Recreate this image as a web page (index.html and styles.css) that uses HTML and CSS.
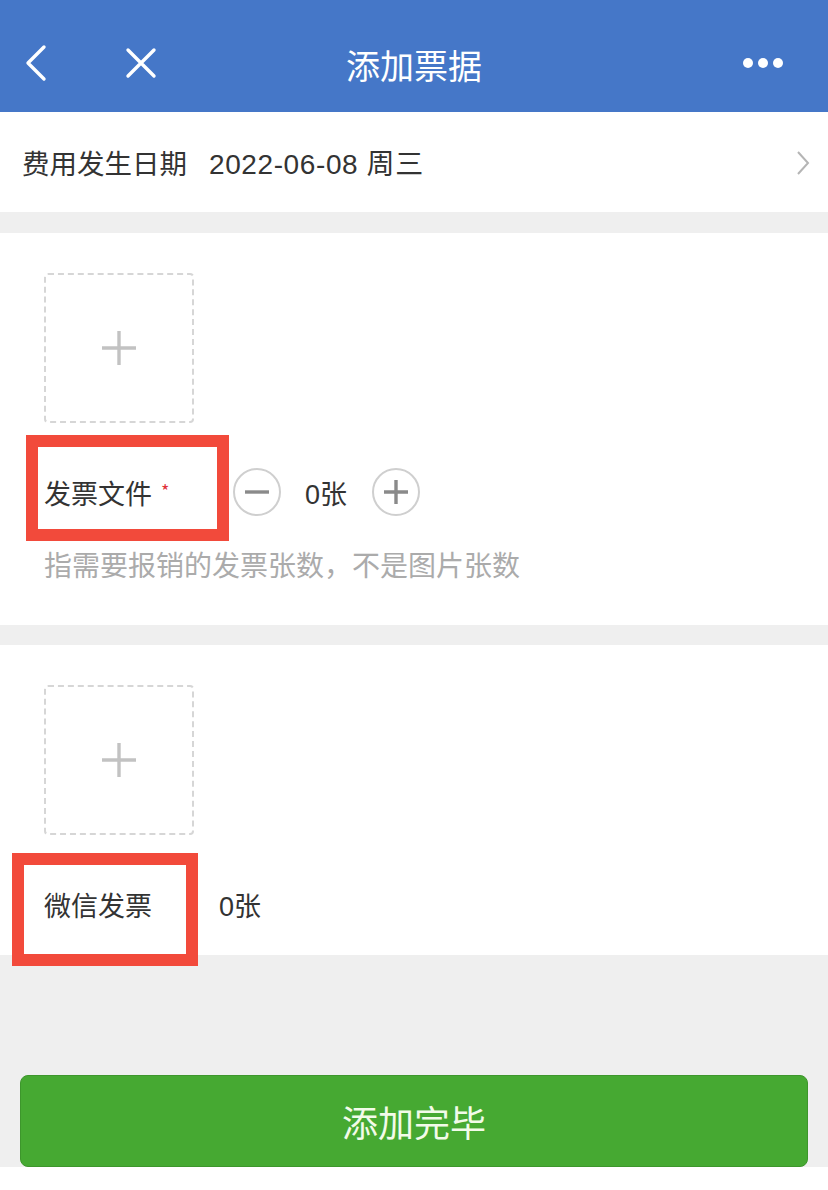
FILE: index.html
```html
<!DOCTYPE html>
<html lang="zh">
<head>
<meta charset="utf-8">
<link rel="stylesheet" href="styles.css">
</head>
<body>
<div class="page">
  <header class="nav">
    <div class="nav-left">
      <svg class="ico-back" width="30" height="40" viewBox="0 0 30 40"><polyline points="20,4 4,20 20,36" fill="none" stroke="#fff" stroke-width="3.4" stroke-linecap="round" stroke-linejoin="round"/></svg>
      <svg class="ico-close" width="34" height="34" viewBox="0 0 34 34"><path d="M4 4 L30 30 M30 4 L4 30" stroke="#fff" stroke-width="3.4" stroke-linecap="round"/></svg>
    </div>
    <div class="nav-title">添加票据</div>
    <div class="nav-right">
      <svg width="42" height="12" viewBox="0 0 42 12"><circle cx="6" cy="6" r="5" fill="#fff"/><circle cx="21" cy="6" r="5" fill="#fff"/><circle cx="36" cy="6" r="5" fill="#fff"/></svg>
    </div>
  </header>

  <div class="date-row">
    <span class="date-label">费用发生日期</span>
    <span class="date-value">2022-06-08 周三</span>
    <svg class="chev" width="14" height="26" viewBox="0 0 14 26"><polyline points="2,2 12,13 2,24" fill="none" stroke="#b5b5b5" stroke-width="2"/></svg>
  </div>

  <section class="card card-1">
    <div class="upload">
      <svg width="36" height="36" viewBox="0 0 36 36"><path d="M18 1 V35 M1 18 H35" stroke="#c2c2c2" stroke-width="3.4"/></svg>
    </div>
    <div class="count-row">
      <span class="label">发票文件<span class="star">*</span></span>
      <span class="stepper">
        <span class="round-btn"><svg width="30" height="30" viewBox="0 0 30 30"><path d="M3 15 H27" stroke="#8a8a8a" stroke-width="3.4"/></svg></span>
        <span class="num">0张</span>
        <span class="round-btn"><svg width="30" height="30" viewBox="0 0 30 30"><path d="M3 15 H27 M15 3 V27" stroke="#8a8a8a" stroke-width="3.4"/></svg></span>
      </span>
      <span class="mark mark-1"></span>
    </div>
    <div class="hint">指需要报销的发票张数，不是图片张数</div>
  </section>

  <section class="card card-2">
    <div class="upload">
      <svg width="36" height="36" viewBox="0 0 36 36"><path d="M18 1 V35 M1 18 H35" stroke="#c2c2c2" stroke-width="3.4"/></svg>
    </div>
    <div class="count-row count-row-2">
      <span class="label">微信发票</span>
      <span class="num num-2">0张</span>
      <span class="mark mark-2"></span>
    </div>
  </section>

  <div class="footer">
    <button class="done">添加完毕</button>
  </div>
</div>
</body>
</html>
```

FILE: styles.css
```css
* { box-sizing: border-box; }
html, body { margin: 0; padding: 0; }
body {
  width: 828px;
  height: 1190px;
  overflow: hidden;
  background: #fff;
  font-family: "Noto Sans CJK SC", "Noto Sans", sans-serif;
  color: #333;
}
.page {
  display: flex;
  flex-direction: column;
  background: #efefef;
  height: 1167px;
}
.nav {
  height: 112px;
  background: #4577c8;
  display: flex;
  align-items: center;
  position: relative;
  padding-top: 14px;
}
.nav-left {
  display: flex;
  align-items: center;
  padding-left: 24px;
  gap: 70px;
}
.nav-title {
  position: absolute;
  left: 0; right: 0;
  top: 16px; bottom: 0;
  display: flex;
  align-items: center;
  justify-content: center;
  color: #fff;
  font-size: 34px;
  pointer-events: none;
}
.nav-right {
  margin-left: auto;
  padding-right: 44px;
  display: flex;
  align-items: center;
}
.date-row {
  height: 100px;
  background: #fff;
  display: flex;
  align-items: center;
  padding: 0 18px 0 22px;
  font-size: 27.5px;
  color: #333;
}
.date-label { margin-right: 22px; }
.date-value { flex: 1; font-family: "Liberation Sans", "Noto Sans CJK SC", sans-serif; font-size: 28px; letter-spacing: 0.6px; }
.chev { margin-top: 2px; }
.card {
  background: #fff;
  margin-top: 21px;
  padding: 40px 0 0 44px;
}
.card-1 { height: 392px; }
.card-2 { height: 310px; margin-top: 20px; }
.upload {
  width: 150px;
  height: 150px;
  border: 2px dashed #d6d6d6;
  border-radius: 4px;
  display: flex;
  align-items: center;
  justify-content: center;
}
.count-row {
  position: relative;
  display: flex;
  align-items: center;
  height: 48px;
  margin-top: 45px;
  font-size: 27px;
  color: #333;
}
.label { display: flex; align-items: center; width: 165px; }
.star { color: #e0323a; font-size: 18px; margin-left: 9px; line-height: 1; margin-top: -4px; }
.stepper { display: flex; align-items: center; margin-left: 24px; }
.round-btn {
  width: 48px; height: 48px;
  border: 2px solid #cfcfcf;
  border-radius: 50%;
  display: flex; align-items: center; justify-content: center;
}
.num { margin: 0 25px 0 24px; font-family: "Liberation Sans", "Noto Sans CJK SC", sans-serif; }
.num-2 { margin: 0; }
.count-row-2 { margin-top: 45px; }
.count-row-2 .label { width: 175px; }
.hint {
  margin-top: 28px;
  font-size: 28px;
  color: #ababab;
}
.mark {
  position: absolute;
  border: 12px solid #f24a3b;
}
.mark-1 { left: -18px; top: -33px; width: 203px; height: 106px; }
.mark-2 { left: -32px; top: -27px; width: 186px; height: 113px; }
.footer {
  flex: 1;
  display: flex;
  align-items: flex-end;
  padding: 0 20px 0 20px;
}
.done {
  width: 100%;
  height: 92px;
  border: 1px solid #3d962c;
  border-radius: 8px;
  background: #46a932;
  color: #f2fbe9;
  font-family: "Noto Sans CJK SC", sans-serif;
  font-size: 36px;
  padding: 0;
}
```
